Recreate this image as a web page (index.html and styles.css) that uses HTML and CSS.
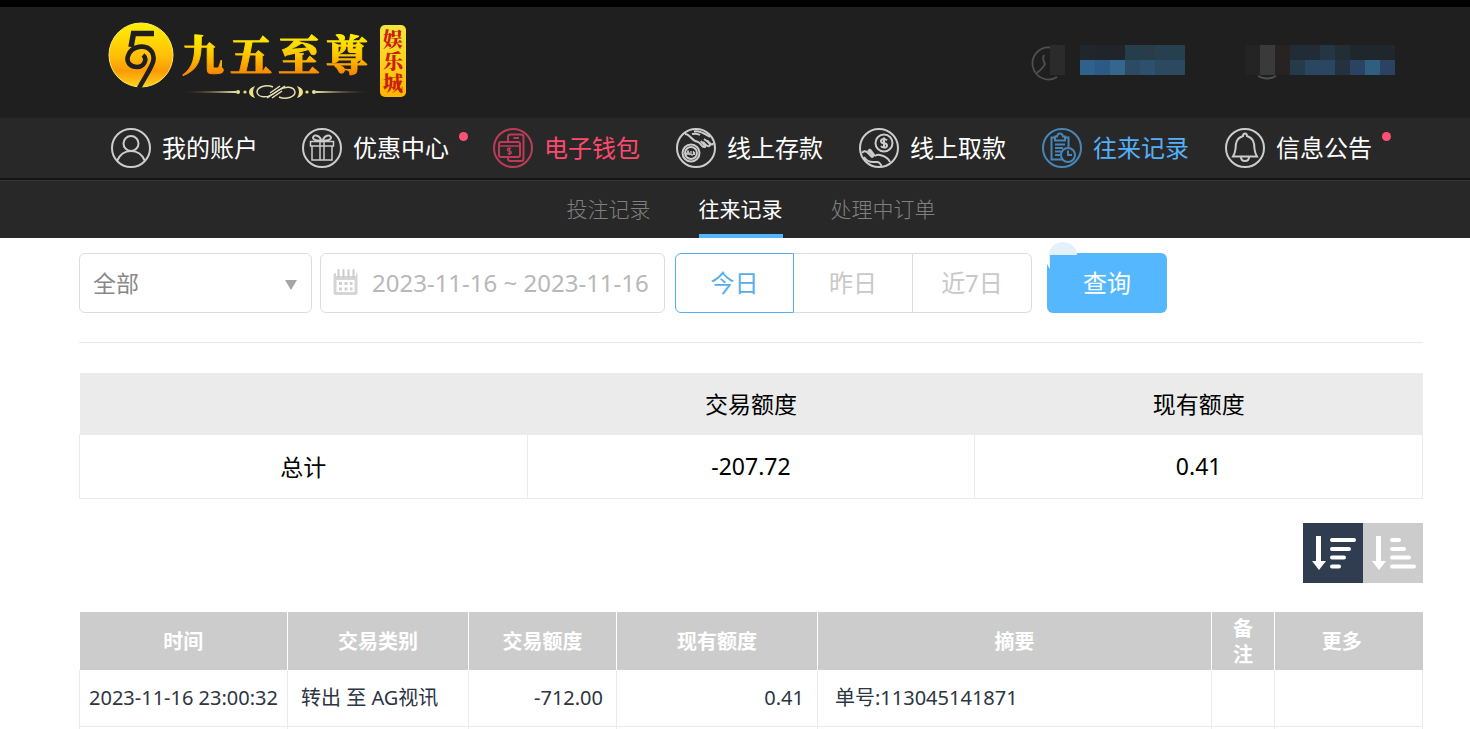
FILE: index.html
```html
<!DOCTYPE html>
<html lang="zh-CN">
<head>
<meta charset="utf-8">
<meta name="viewport" content="width=device-width, initial-scale=1">
<title>往来记录</title>
<link rel="stylesheet" href="styles.css">
</head>
<body>
<header class="topbar">
  <a class="logo" href="#">
    <svg class="logo-mark" viewBox="0 0 66 66" aria-hidden="true">
      <defs>
        <linearGradient id="gold" x1="0" y1="0" x2="0" y2="1"><stop offset="0" stop-color="#fff200"/><stop offset=".5" stop-color="#ffc107"/><stop offset=".75" stop-color="#fb9a06"/><stop offset="1" stop-color="#ffd21a"/></linearGradient>
      </defs>
      <circle cx="33" cy="33" r="32" fill="url(#gold)" stroke="#ffe96a" stroke-width="1"/>
      <path d="M46 11.500H25.500L23 25" fill="none" stroke="#1f1f1f" stroke-width="5.500"/>
      <path d="M35 33C40 37 36 45 29 45C22 45 18 40 20 34C23 24 38 21 44 30C49 39 42 46 31 66" fill="none" stroke="#1f1f1f" stroke-width="4.600"/>
    </svg>
    <span class="logo-words">
      <span class="logo-name"><span>九</span><span>五</span><span>至</span><span>尊</span></span>
      <svg class="logo-flourish" viewBox="0 0 188 16" aria-hidden="true">
        <defs><linearGradient id="fade" x1="0" x2="1" y1="0" y2="0"><stop offset="0" stop-color="#e8cf6a" stop-opacity=".1"/><stop offset=".3" stop-color="#f3ebb8"/><stop offset=".7" stop-color="#f3ebb8"/><stop offset="1" stop-color="#e8cf6a" stop-opacity=".1"/></linearGradient></defs>
        <path d="M0 8L54 7V9ZM188 8L134 7V9Z" fill="url(#fade)"/>
        <g fill="#efdf8c"><circle cx="56" cy="8" r="2"/><circle cx="63" cy="8" r="1.600"/><circle cx="132" cy="8" r="2"/><circle cx="125" cy="8" r="1.600"/><path d="M73 2Q67 4 67 8Q67 12 73 14Q69 8 73 2ZM115 2Q121 4 121 8Q121 12 115 14Q119 8 115 2Z"/></g>
        <g fill="none" stroke="#e6dfb4" stroke-width="1.500"><path d="M91 3C84 0 75 3 75 8C76 14 85 14 91 10L103 2"/><path d="M97 13C104 16 113 13 113 8C112 2 103 2 97 6L85 14"/><path d="M88 9L98 2M90 14L100 7"/></g>
      </svg>
    </span>
    <span class="logo-tag">娱乐城</span>
  </a>
  <div class="account">
    <svg class="account-user" viewBox="0 0 154 36" role="img" aria-label="账户">
      <g fill="none" stroke="#505050" stroke-width="1.800"><path d="M19 2.500A16 16 0 1 0 26 32"/><path d="M13 10Q11 14 14 19Q13 22 6 28"/></g>
      <path fill="#2b2b2b" d="M19 0h15v30h-15z"/>
      <path fill="#20272c" d="M49 0h15v15h-15z"/><path fill="#20252b" d="M64 0h30v15h-30z"/><path fill="#263e4c" d="M94 0h15v15h-15z"/><path fill="#293c49" d="M109 0h15v15h-15z"/><path fill="#27404f" d="M124 0h30v15h-30z"/>
      <path fill="#30608c" d="M49 15h15v15h-15z"/><path fill="#2d5a84" d="M64 15h15v15h-15z"/><path fill="#34678d" d="M79 15h15v15h-15z"/><path fill="#2c4a64" d="M94 15h15v15h-15z"/><path fill="#2d506f" d="M109 15h15v15h-15z"/><path fill="#2b4a62" d="M124 15h30v15h-30z"/>
    </svg>
    <svg class="account-balance" viewBox="0 0 150 36" role="img" aria-label="余额">
      <path d="M13 31Q22 36 31 31" fill="none" stroke="#505050" stroke-width="1.800"/>
      <path fill="#242424" d="M0 0h15v30h-15z"/><path fill="#3a3a3a" d="M15 0h15v30h-15z"/><path fill="#282322" d="M30 0h15v30h-15z"/>
      <path fill="#222c36" d="M45 0h30v15h-30z"/><path fill="#243544" d="M75 0h15v15h-15z"/><path fill="#222d36" d="M90 0h15v15h-15z"/><path fill="#20272c" d="M105 0h45v15h-45z"/>
      <path fill="#263b49" d="M45 15h15v15h-15z"/><path fill="#2b4660" d="M60 15h30v15h-30z"/><path fill="#23323e" d="M90 15h15v15h-15z"/><path fill="#2b4362" d="M105 15h15v15h-15z"/><path fill="#2f5e7e" d="M120 15h15v15h-15z"/><path fill="#2b4362" d="M135 15h15v15h-15z"/>
    </svg>
  </div>
</header>

<nav class="mainnav">
  <a class="nav-item nav-item-wide" href="#">
    <svg class="nav-icon" viewBox="0 0 40 40"><circle cx="20" cy="20" r="19"/><circle cx="20" cy="15.500" r="7.500"/><path d="M6 33C9 26 14 23 20 23S31 26 34 33"/></svg>
    <span>我的账户</span>
  </a>
  <a class="nav-item nav-item-wide" href="#">
    <svg class="nav-icon" viewBox="0 0 40 40"><circle cx="20" cy="20" r="19"/><path d="M8.500 13.500h23v4.500h-23zM10 18v14h20V18M18 13.500V32M22 13.500V32" stroke-width="1.500"/><path d="M19 13C16 12 11 13 11 9.500C12 5.500 18 8 19 12ZM21 13C24 12 29 13 29 9.500C28 5.500 22 8 21 12Z"/></svg>
    <span>优惠中心</span><i class="dot"></i>
  </a>
  <a class="nav-item nav-item-pink" href="#">
    <svg class="nav-icon" viewBox="0 0 40 40"><circle cx="20" cy="20" r="19"/><path d="M15 13V9Q15 6.500 17.500 6.500H28Q30.500 6.500 30.500 9V30.500Q30.500 33 28 33H17.500Q15 33 15 30.500V29M20.500 10H26"/><rect x="6" y="14" width="21" height="15" rx="2"/><path d="M6 18h21M18 20.500Q15 19.500 14.500 21.500Q14.500 23 16.500 23Q18.500 23.500 18.200 25Q17 26.500 14.500 25.500M16.500 19.500v7.500" stroke-width="1.400"/></svg>
    <span>电子钱包</span>
  </a>
  <a class="nav-item" href="#">
    <svg class="nav-icon" viewBox="0 0 40 40"><circle cx="20" cy="20" r="19"/><circle cx="15" cy="25" r="8.500"/><circle cx="15" cy="25" r="6"/><path d="M10 27L12 23L14 27M11 26h2M15 23V26Q15 27 16 27T17.500 26V23M18.500 27V24" stroke-width="1.300"/><path d="M9 6C14 6 16 13 21 13.500C26 15 25 20 29 19C30 18 26 15 25 13M27 14Q32 20 34 17.500Q34 15 28 11M31 12.500Q37 19 37 15M18 3.500C24 2 29 6 34 9M16 6Q21 5 24 7"/></svg>
    <span>线上存款</span>
  </a>
  <a class="nav-item" href="#">
    <svg class="nav-icon" viewBox="0 0 40 40"><circle cx="20" cy="20" r="19"/><circle cx="25" cy="15" r="8.500"/><path d="M28 12.300Q26.500 11 25 11Q22 11 22 13T25 15.200T28 17.500T25 19.500Q23 19.500 22 18M25 9.500v11"/><path d="M3 25Q5 22 8 24L13 29Q15 29 13 26L9 22M10 23Q10 20 13 24L16 28M5 29Q8 34 14 34H18Q21 34 23 39M16 28Q18 26 21 27Q29 29 31 34"/></svg>
    <span>线上取款</span>
  </a>
  <a class="nav-item nav-item-active" href="#">
    <svg class="nav-icon" viewBox="0 0 40 40"><circle cx="20" cy="20" r="19"/><path d="M13 9.500H9.500V31.500H20M23 9.500H26.500V19M13 12.500V8.500H15Q15.500 5.500 18 5.500T21 8.500H23V12.500ZM13 16.500H23M13 20H21M13 23.500H19M13 27H18"/><circle cx="26" cy="27" r="7"/><path d="M26 22.500V27H30"/></svg>
    <span>往来记录</span>
  </a>
  <a class="nav-item" href="#">
    <svg class="nav-icon" viewBox="0 0 40 40"><circle cx="20" cy="20" r="19"/><path d="M20 5.500Q22 5.500 22 8C28 10 29.500 14 29.500 21Q30 25 32 28.500H8Q10 25 10.500 21C10.500 14 12 10 18 8Q18 5.500 20 5.500ZM16 29Q16 33 20 33T24 29"/></svg>
    <span>信息公告</span><i class="dot"></i>
  </a>
</nav>

<nav class="subnav">
  <a class="subnav-item" href="#">投注记录</a>
  <a class="subnav-item subnav-item-active" href="#">往来记录</a>
  <a class="subnav-item" href="#">处理中订单</a>
</nav>

<main class="page">
  <form class="filters">
    <div class="select-box">
      <select class="select" aria-label="交易类别"><option>全部</option></select>
      <svg class="select-arrow" viewBox="0 0 12 10" aria-hidden="true"><path d="M0 0h12L6 10z"/></svg>
    </div>
    <label class="date-box">
      <svg class="date-icon" viewBox="0 0 24 26" aria-hidden="true"><path fill="#d5d5d5" fill-rule="evenodd" d="M2 4H22Q24 4 24 6V24Q24 26 22 26H2Q0 26 0 24V6Q0 4 2 4ZM3 11V23H21V11Z"/><path stroke="#fff" stroke-width="5" d="M5 1V7M10 1V7M15 1V7M20 1V7"/><path stroke="#ccc" stroke-width="2" stroke-linecap="round" d="M5 1V8M10 1V8M15 1V8M20 1V8"/><path stroke="#d0d0d0" stroke-width="3" stroke-dasharray="3 2.500" d="M5.500 14.500H19M5.500 20H19"/></svg>
      <input class="date-input" type="text" value="2023-11-16 ~ 2023-11-16" aria-label="日期">
    </label>
    <div class="range">
      <button class="range-btn range-btn-active" type="button">今日</button>
      <button class="range-btn" type="button">昨日</button>
      <button class="range-btn" type="button">近7日</button>
    </div>
    <button class="search-btn" type="button">查询
      <svg class="search-mark" viewBox="0 0 32 28" aria-hidden="true"><path fill="#fff" d="M2 11h16v2H5v14Q3 24 2 22z"/><path fill="#e3f1fc" d="M4 13A14 13 0 0 1 32 13H5V26Q3 22 4 13Z"/></svg>
    </button>
  </form>

  <table class="summary">
    <thead><tr><th></th><th>交易额度</th><th>现有额度</th></tr></thead>
    <tbody><tr><td>总计</td><td>-207.72</td><td>0.41</td></tr></tbody>
  </table>

  <div class="sort">
    <button class="sort-btn sort-btn-active" type="button" aria-label="降序"><svg viewBox="0 0 60 60"><path d="M13 13h5v25h5L16 47L9 38h4z"/><path class="bars" d="M29 17H51M29 26H46M29 34.500H41M29 43.500H36"/></svg></button>
    <button class="sort-btn" type="button" aria-label="升序"><svg viewBox="0 0 60 60"><path d="M13 13h5v25h5L16 47L9 38h4z"/><path class="bars" d="M29 17H36M29 26H41M29 34.500H46M29 43.500H51"/></svg></button>
  </div>

  <table class="records">
    <colgroup><col class="c-time"><col class="c-type"><col class="c-amount"><col class="c-balance"><col class="c-summary"><col class="c-note"><col class="c-more"></colgroup>
    <thead><tr><th>时间</th><th>交易类别</th><th>交易额度</th><th>现有额度</th><th>摘要</th><th>备注</th><th class="more">更多</th></tr></thead>
    <tbody>
      <tr><td class="time">2023-11-16 23:00:32</td><td>转出 至 AG视讯</td><td class="num">-712.00</td><td class="num">0.41</td><td class="desc">单号:113045141871</td><td></td><td></td></tr>
      <tr class="row-end"><td></td><td></td><td></td><td></td><td></td><td></td><td></td></tr>
    </tbody>
  </table>
</main>
</body>
</html>
```
FILE: styles.css
```css
* { box-sizing: border-box; }
body {
  margin: 0;
  background: #fff;
  color: #000;
  font-family: "Noto Sans", "Noto Sans CJK SC", sans-serif;
}
a { color: inherit; text-decoration: none; }
button, input, select { font: inherit; margin: 0; }
svg { display: block; flex: none; }

.topbar {
  display: flex;
  justify-content: space-between;
  align-items: flex-start;
  height: 118px;
  padding: 15px 75px 0 108px;
  border-top: 7px solid #000;
  background: #1f1f1f;
}
.logo { display: flex; }
.logo-mark { width: 66px; height: 66px; }
.logo-words { display: flex; flex-direction: column; margin-left: 8px; padding-top: 8px; }
.logo-name {
  display: flex;
  gap: 6px;
  height: 54px;
  font: 900 42px/46px "Noto Serif CJK SC", "Noto Sans CJK SC", sans-serif;
  color: transparent;
  background: linear-gradient(#fff200 5%, #ffc800 45%, #f98a00 80%);
  -webkit-background-clip: text;
  background-clip: text;
  -webkit-text-stroke: 1px transparent;
}
.logo-flourish { width: 188px; height: 16px; }
.logo-tag {
  width: 26px;
  height: 72px;
  margin: 3px 0 0 10px;
  padding: 3px 3px 0;
  border-radius: 5px;
  background: linear-gradient(#f2e63a, #ffd21a 50%, #ffb400);
  color: #c8200c;
  font: 900 20px/22px "Noto Serif CJK SC", "Noto Sans CJK SC", sans-serif;
  text-align: center;
  word-break: break-all;
}
.account { display: flex; gap: 60px; padding-top: 23px; }
.account-user { width: 154px; height: 36px; }
.account-balance { width: 150px; height: 36px; }

.mainnav {
  display: flex;
  align-items: center;
  gap: 36px;
  height: 62px;
  padding: 0 47px 0 111px;
  border-bottom: 2px solid #151515;
  background: #282828;
  color: #fff;
  font-size: 24px;
  line-height: 36px;
  white-space: nowrap;
}
.nav-item { position: relative; display: flex; align-items: center; gap: 11px; }
.nav-item-wide { margin-right: 8px; }
.nav-icon { width: 40px; height: 40px; fill: none; stroke: #ccc; stroke-width: 2px; }
.nav-item-pink { color: #ff4a6e; }
.nav-item-pink .nav-icon { stroke: #bd3b59; }
.nav-item-active { color: #55b0f8; }
.nav-item-active .nav-icon { stroke: #4686b8; }
.dot {
  position: absolute;
  top: 4px;
  right: -19px;
  width: 9px;
  height: 9px;
  border-radius: 50%;
  background: #ff5175;
}

.subnav {
  display: flex;
  justify-content: center;
  gap: 48px;
  height: 58px;
  padding: 0 47px 0 79px;
  border-top: 1px solid #363636;
  background: #282828;
  color: #808080;
  font-size: 21px;
  font-weight: 300;
  line-height: 56px;
}
.subnav-item-active { color: #fff; border-bottom: 4px solid #55b6fb; font-weight: 400; }

.page { padding: 15px 47px 0 79px; }
.filters {
  display: flex;
  height: 90px;
  border-bottom: 1px solid #e9e9e9;
  font-size: 24px;
}
.select-box { position: relative; width: 233px; height: 60px; margin-right: 8px; }
.select {
  appearance: none;
  width: 100%;
  height: 100%;
  padding: 0 30px 0 13px;
  border: 1px solid #dcdcdc;
  border-radius: 6px;
  background: #fff;
  color: #888;
  font-size: 23px;
}
.select-arrow { position: absolute; right: 15px; top: 27px; width: 12px; height: 10px; fill: #a5a5a5; }
.date-box {
  display: flex;
  align-items: center;
  gap: 14px;
  width: 345px;
  height: 60px;
  margin-right: 10px;
  padding: 0 8px 2px 12px;
  border: 1px solid #dcdcdc;
  border-radius: 6px;
}
.date-icon { width: 25px; height: 26px; }
.date-input {
  flex: 1;
  min-width: 0;
  padding: 0;
  border: 0;
  outline: 0;
  background: none;
  color: #b8b8b8;
}
.range { display: flex; margin-right: 15px; }
.range-btn {
  width: 119px;
  height: 60px;
  padding: 0 0 3px;
  border: 1px solid #dcdcdc;
  border-left-width: 0;
  background: #fff;
  color: #c8c8c8;
}
.range-btn:last-child { border-radius: 0 6px 6px 0; }
.range-btn-active { border: 1px solid #57adee; border-radius: 6px 0 0 6px; color: #57adee; }
.search-btn {
  position: relative;
  width: 120px;
  height: 60px;
  padding: 0 0 3px;
  border: 0;
  border-radius: 6px;
  background: #55b8ff;
  color: #fff;
}
.search-mark { position: absolute; left: -2px; top: -11px; width: 32px; height: 28px; }

table { width: 100%; border-collapse: collapse; table-layout: fixed; }
.summary { margin-top: 30px; font-size: 23px; text-align: center; }
.summary th { height: 61px; padding: 0; background: #ebebeb; font-weight: 400; }
.summary td { height: 64px; padding: 0; border: 1px solid #ebebeb; }

.sort { display: flex; justify-content: flex-end; margin: 24px 0 29px; }
.sort-btn { width: 60px; height: 60px; padding: 0; border: 0; background: #ccc; }
.sort-btn-active { background: #303d50; }
.sort-btn svg { width: 60px; height: 60px; fill: #fff; }
.sort-btn .bars { fill: none; stroke: #fff; stroke-width: 4px; stroke-linecap: round; }

.records { font-size: 20px; line-height: 26px; color: #2c3542; }
.c-time { width: 208px; }
.c-type { width: 181px; }
.c-amount { width: 148px; }
.c-balance { width: 201px; }
.c-note { width: 63px; }
.c-more { width: 148px; }
.records th {
  height: 58px;
  padding: 2px 20px 0;
  border-left: 1px solid #fff;
  background: #ccc;
  color: #fff;
  font-weight: 700;
}
.records th:first-child { border-left: 0; }
.records th.more { padding-right: 34px; }
.records td { height: 57px; padding: 0 13px; border: 1px solid #ebebeb; border-top: 0; white-space: nowrap; }
.records .time { padding: 0; text-align: center; }
.records .num { text-align: right; }
.records .desc { padding-left: 17px; }
.records .row-end td { height: 2px; padding: 0; border-bottom: 0; }
```
